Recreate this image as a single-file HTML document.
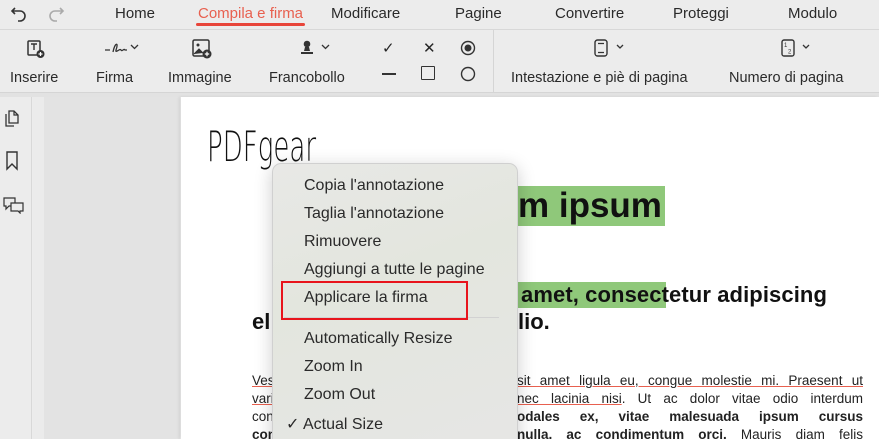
<!DOCTYPE html>
<html><head><meta charset="utf-8"><style>
*{margin:0;padding:0;box-sizing:border-box}
html,body{width:879px;height:439px;overflow:hidden}
body{position:relative;background:#ececec;font-family:"Liberation Sans",sans-serif;color:#262626}
.a{position:absolute;white-space:nowrap}
.tab{position:absolute;top:5px;font-size:15px;color:#2a2a2a}
.lbl{position:absolute;top:70px;font-size:14.5px;color:#2a2a2a}
.ln{position:absolute;left:517px;width:346px;font-size:13.5px;text-align:justify;text-align-last:justify;white-space:nowrap;color:#222}
.lf{position:absolute;left:252px;font-size:13.5px;color:#222;white-space:nowrap}
.mi{position:absolute;left:304px;font-size:16px;color:#2a2a2a}
svg{position:absolute}
</style></head><body>
<svg style="left:10px;top:6px" width="18" height="16" viewBox="0 0 18 16"><path d="M5 2 L2 5 L5 8 M2 5 H10 A5 5 0 0 1 10 15 H8" fill="none" stroke="#333" stroke-width="1.6"/></svg>
<svg style="left:47px;top:6px" width="18" height="16" viewBox="0 0 18 16"><path d="M13 2 L16 5 L13 8 M16 5 H8 A5 5 0 0 0 8 15 H10" fill="none" stroke="#aaa" stroke-width="1.6"/></svg>
<div class="tab" style="left:115px">Home</div>
<div class="tab" style="left:198px;color:#e8604f">Compila e firma</div>
<div style="position:absolute;left:196px;top:23px;width:109px;height:3px;border-radius:2px;background:#e8453a"></div>
<div class="tab" style="left:331px">Modificare</div>
<div class="tab" style="left:455px">Pagine</div>
<div class="tab" style="left:555px">Convertire</div>
<div class="tab" style="left:673px">Proteggi</div>
<div class="tab" style="left:788px">Modulo</div>
<div style="position:absolute;left:0;top:29px;width:879px;height:1px;background:#d8d8d8"></div>
<svg style="left:26px;top:39px" width="20" height="20" viewBox="0 0 20 20"><rect x="2" y="2" width="12" height="14" rx="1" fill="none" stroke="#333" stroke-width="1.5"/><path d="M5 5H11M8 5V11" stroke="#333" stroke-width="1.4"/><circle cx="14.5" cy="15" r="4" fill="#333"/><path d="M12.5 15H16.5M14.5 13V17" stroke="#fff" stroke-width="1.2"/></svg>
<svg style="left:103px;top:40px" width="36" height="16" viewBox="0 0 36 16"><path d="M2 10 H7 M10 12 C12 2 16 2 13 10 C12 14 17 8 18 10 C19 12 21 8 22 10 H24" fill="none" stroke="#333" stroke-width="1.3"/><path d="M28 5 L31.5 8.5 L35 5" fill="none" stroke="#333" stroke-width="1.3"/></svg>
<svg style="left:191px;top:39px" width="22" height="20" viewBox="0 0 22 20"><rect x="2" y="1" width="16" height="16" rx="1.5" fill="none" stroke="#333" stroke-width="1.5"/><circle cx="7" cy="6" r="1.5" fill="#333"/><path d="M3 15 L8 10 L12 14" fill="#333" stroke="#333"/><circle cx="16" cy="15" r="4.5" fill="#333"/><path d="M13.8 15H18.2M16 12.8V17.2" stroke="#fff" stroke-width="1.2"/></svg>
<svg style="left:298px;top:40px" width="36" height="16" viewBox="0 0 36 16"><circle cx="9" cy="4" r="3.3" fill="#333"/><path d="M7 7 H11 L12 11 H6 Z" fill="#333"/><rect x="3" y="12" width="12" height="2" fill="#333"/><path d="M24 5 L27.5 8.5 L31 5" fill="none" stroke="#333" stroke-width="1.3"/></svg>
<div class="a" style="left:382px;top:39px;font-size:15px">✓</div>
<div class="a" style="left:423px;top:39px;font-size:15px">✕</div>
<svg style="left:459px;top:39px" width="18" height="18"><circle cx="9" cy="9" r="6.5" fill="none" stroke="#333" stroke-width="1.4"/><circle cx="9" cy="9" r="3.5" fill="#333"/></svg>
<div style="position:absolute;left:382px;top:73px;width:14px;height:1.5px;background:#333"></div>
<div style="position:absolute;left:421px;top:66px;width:14px;height:14px;border:1.4px solid #333;border-radius:1px"></div>
<svg style="left:459px;top:65px" width="18" height="18"><circle cx="9" cy="9" r="6.5" fill="none" stroke="#333" stroke-width="1.4"/></svg>
<div style="position:absolute;left:493px;top:30px;width:1px;height:63px;background:#d5d5d5"></div>
<svg style="left:593px;top:39px" width="36" height="18" viewBox="0 0 36 18"><rect x="2" y="1" width="12" height="16" rx="2.5" fill="none" stroke="#333" stroke-width="1.4"/><path d="M5 4.5H11M5 13.5H11" stroke="#333" stroke-width="1.3"/><path d="M24 6 L27 9 L30 6" fill="none" stroke="#333" stroke-width="1.3"/></svg>
<svg style="left:780px;top:39px" width="36" height="18" viewBox="0 0 36 18"><rect x="2" y="1" width="12" height="16" rx="2" fill="none" stroke="#333" stroke-width="1.4"/><text x="4" y="8" font-size="6" fill="#333" font-family="Liberation Sans">1</text><text x="8" y="14.5" font-size="6" fill="#333" font-family="Liberation Sans">2</text><path d="M23 6 L26 9 L29 6" fill="none" stroke="#333" stroke-width="1.3"/></svg>
<div class="lbl" style="left:10px">Inserire</div>
<div class="lbl" style="left:96px">Firma</div>
<div class="lbl" style="left:168px">Immagine</div>
<div class="lbl" style="left:269px">Francobollo</div>
<div class="lbl" style="left:511px">Intestazione e piè di pagina</div>
<div class="lbl" style="left:729px">Numero di pagina</div>
<div style="position:absolute;left:0;top:92px;width:879px;height:1px;background:#d5d5d5"></div>
<div style="position:absolute;left:0;top:93px;width:879px;height:4px;background:#e2e2e2"></div>
<div style="position:absolute;left:0;top:97px;width:32px;height:342px;background:#ececec;border-right:1px solid #d8d8d8"></div>
<div style="position:absolute;left:33px;top:97px;width:11px;height:342px;background:#ebebeb"></div>
<div style="position:absolute;left:44px;top:97px;width:136px;height:342px;background:#e3e3e3"></div>
<svg style="left:4px;top:108px" width="16" height="20" viewBox="0 0 16 20"><path d="M5 3 H10 L14 7 V15 H5 Z" fill="none" stroke="#333" stroke-width="1.3"/><path d="M2 6 V18 H10" fill="none" stroke="#333" stroke-width="1.3"/><path d="M10 3 V7 H14" fill="none" stroke="#333" stroke-width="1.2"/></svg>
<svg style="left:6px;top:151px" width="12" height="20" viewBox="0 0 12 20"><path d="M1 1 H11 V18 L6 13 L1 18 Z" fill="none" stroke="#333" stroke-width="1.4"/></svg>
<svg style="left:2px;top:196px" width="22" height="18" viewBox="0 0 22 18"><path d="M2 2 H13 V10 H7 L4 13 V10 H2 Z" fill="none" stroke="#333" stroke-width="1.2"/><path d="M9 7 H21 V15 H18 V17 L16 15 H9 Z" fill="#ececec" stroke="#333" stroke-width="1.2"/></svg>
<div style="position:absolute;left:181px;top:97px;width:698px;height:342px;background:#fff;box-shadow:-2px 0 3px rgba(0,0,0,.08)"></div>
<div class="a" style="left:207px;top:122px;font-family:'DejaVu Sans',sans-serif;font-size:42px;font-weight:200;color:#111;transform:scaleX(.62);transform-origin:left">PDFgear</div>
<div style="position:absolute;left:516px;top:186px;width:149px;height:40px;background:#8fc87a"></div>
<div class="a" style="left:518px;top:186px;font-size:35px;font-weight:bold;color:#111;letter-spacing:0">m ipsum</div>
<div style="position:absolute;left:516px;top:282px;width:150px;height:26px;background:#8fc87a"></div>
<div class="a" style="left:521px;top:282px;font-size:22px;font-weight:bold;color:#111;letter-spacing:.1px">amet, consectetur adipiscing</div>
<div class="a" style="left:252px;top:309px;font-size:22px;font-weight:bold;color:#111">el</div>
<div class="a" style="left:518px;top:309px;font-size:22px;font-weight:bold;color:#111">lio.</div>
<div class="lf" style="top:373px;text-decoration:underline;text-decoration-color:#e8604f">Vest</div>
<div class="lf" style="top:391px;text-decoration:underline;text-decoration-color:#e8604f">vari</div>
<div class="lf" style="top:409px">con</div>
<div class="lf" style="top:427px"><b>con</b></div>
<div class="ln" style="top:373px;text-decoration:underline;text-decoration-color:#e8604f">sit amet ligula eu, congue molestie mi. Praesent ut</div>
<div class="ln" style="top:391px"><span style="text-decoration:underline;text-decoration-color:#e8604f">nec lacinia nisi</span>. Ut ac dolor vitae odio interdum</div>
<div class="ln" style="top:409px"><b>odales ex, vitae malesuada ipsum cursus</b></div>
<div class="ln" style="top:427px"><b>nulla, ac condimentum orci.</b> Mauris diam felis</div>
<div style="position:absolute;left:272px;top:163px;width:246px;height:290px;border-radius:9px;background:linear-gradient(160deg,#e8e8e6 0%,#e3e6de 40%,#e6e6e5 100%);box-shadow:0 4px 18px rgba(0,0,0,.2);border:1px solid #d0d0d0"></div>
<div class="mi" style="top:177px">Copia l'annotazione</div>
<div class="mi" style="top:205px">Taglia l'annotazione</div>
<div class="mi" style="top:233px">Rimuovere</div>
<div class="mi" style="top:261px">Aggiungi a tutte le pagine</div>
<div class="mi" style="top:289px">Applicare la firma</div>
<div style="position:absolute;left:284px;top:317px;width:215px;height:1px;background:#d2d2d2"></div>
<div class="mi" style="top:330px">Automatically Resize</div>
<div class="mi" style="top:358px">Zoom In</div>
<div class="mi" style="top:386px">Zoom Out</div>
<div class="mi" style="top:414px;left:286px">✓ Actual Size</div>
<div style="position:absolute;left:281px;top:281px;width:187px;height:39px;border:2px solid #e8141c"></div>
</body></html>
